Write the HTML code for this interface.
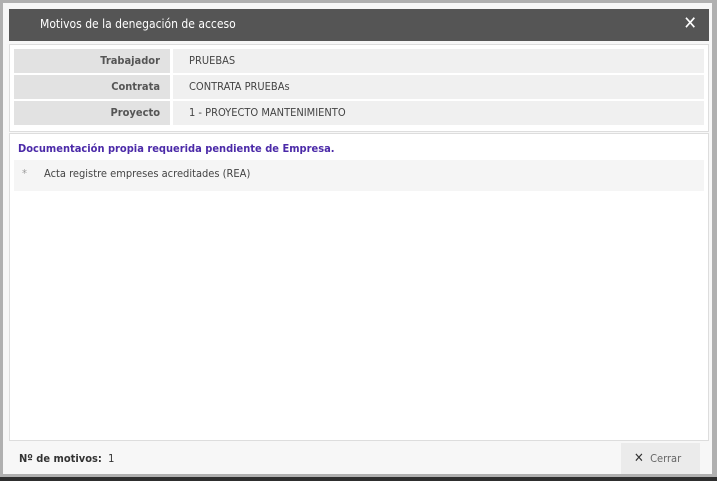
<!DOCTYPE html>
<html><head><meta charset="utf-8"><style>
*{margin:0;padding:0;box-sizing:border-box}
body{width:717px;height:481px;overflow:hidden;background:#2e2e2e;font-family:"DejaVu Sans Condensed","Liberation Sans",sans-serif;position:relative}
.dlg{position:absolute;left:0;top:0;width:717px;height:477px;background:#f7f7f7;border:3px solid #b0b0b0;border-right-width:5px}
.hdr{position:absolute;left:6px;top:6px;width:700px;height:32px;background:#555;color:#fff;font-size:12px;line-height:30px;padding-left:31px}
.x{position:absolute;right:12px;top:0;font-size:18px;font-weight:bold}
.info{position:absolute;left:6px;top:41px;width:700px;height:88px;background:#fff;border:1px solid #ddd}
.row{position:absolute;left:4px;height:24px;width:690px;font-size:11px;line-height:24px;color:#444}
.lab{position:absolute;left:0;width:156px;height:24px;background:#e2e2e2;text-align:right;padding-right:10px;font-weight:bold;color:#555}
.val{position:absolute;left:159px;right:0;height:24px;background:#f0f0f0;padding-left:16px}
.cont{position:absolute;left:6px;top:130px;width:700px;height:308px;background:#fff;border:1px solid #ddd}
.h{position:absolute;left:8px;top:8px;font-size:11px;font-weight:bold;color:#4b2aa8}
.item{position:absolute;left:4px;top:26px;width:690px;height:31px;background:#f5f5f5;font-size:11px;line-height:28px;color:#444}
.foot{position:absolute;left:16px;top:449px;font-size:11px;color:#333}
.btn{position:absolute;left:618px;top:440px;width:79px;height:31px;background:#ebebeb;font-size:11px;line-height:31px;color:#666;padding-left:13px}
</style></head><body>
<div class="dlg">
<div class="hdr">Motivos de la denegación de acceso<span class="x">✕</span></div>
<div class="info">
<div class="row" style="top:4px"><div class="lab">Trabajador</div><div class="val">PRUEBAS</div></div>
<div class="row" style="top:30px"><div class="lab">Contrata</div><div class="val">CONTRATA PRUEBAs</div></div>
<div class="row" style="top:56px"><div class="lab">Proyecto</div><div class="val">1 - PROYECTO MANTENIMIENTO</div></div>
</div>
<div class="cont">
<div class="h">Documentación propia requerida pendiente de Empresa.</div>
<div class="item"><span style="position:absolute;left:8px;color:#999">*</span><span style="position:absolute;left:30px">Acta registre empreses acreditades (REA)</span></div>
</div>
<div class="foot"><b>Nº de motivos:</b>&nbsp; 1</div>
<div class="btn"><b style="color:#333;font-size:13px">✕</b>&nbsp; Cerrar</div>
</div>
</body></html>
